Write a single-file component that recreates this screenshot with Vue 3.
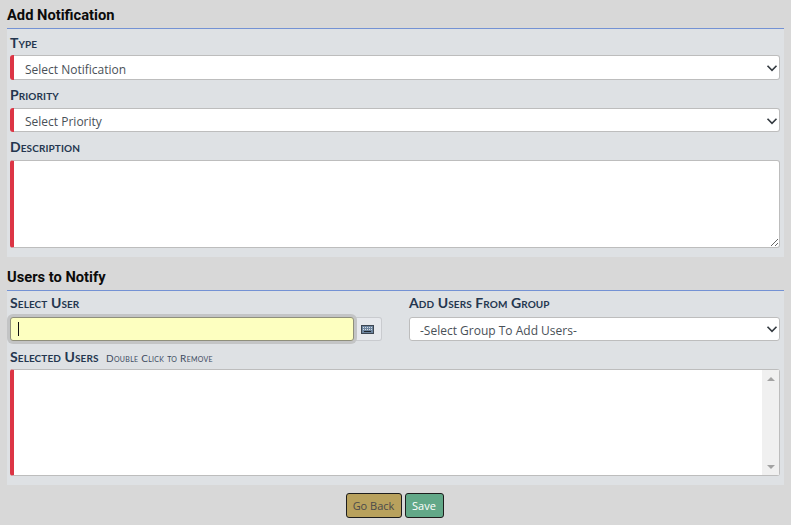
<script setup>
const chevron = "M2 5l6 6 6-6";
</script>

<template>
  <main class="page">
    <section class="block">
      <h2 class="heading">Add Notification</h2>
      <div class="panel">
        <label class="label">Type</label>
        <div class="select-wrap required">
          <select class="control"><option>Select Notification</option></select>
          <svg class="chevron" viewBox="0 0 16 16"><path :d="chevron" /></svg>
        </div>
        <label class="label">Priority</label>
        <div class="select-wrap required">
          <select class="control"><option>Select Priority</option></select>
          <svg class="chevron" viewBox="0 0 16 16"><path :d="chevron" /></svg>
        </div>
        <label class="label">Description</label>
        <textarea class="area required"></textarea>
      </div>
    </section>

    <section class="block second">
      <h2 class="heading">Users to Notify</h2>
      <div class="panel panel-users">
        <div class="columns">
          <div>
            <label class="label">Select User</label>
            <div class="input-group">
              <div class="input-box">
                <input class="user-input" type="text" />
                <span class="caret"></span>
              </div>
              <span class="addon">
                <svg width="13" height="9" viewBox="0 0 13 9">
                  <rect x="0.5" y="0.5" width="12" height="8" fill="#6d85a0" stroke="#3d4652" />
                  <path d="M2 2.5h9M2 4.5h9" stroke="#d5dce3" stroke-dasharray="1 1" />
                  <path d="M3 6.5h7" stroke="#20262e" stroke-width="1" />
                </svg>
              </span>
            </div>
          </div>
          <div>
            <label class="label">Add Users From Group</label>
            <div class="select-wrap group-wrap">
              <select class="control group"><option>-Select Group To Add Users-</option></select>
              <svg class="chevron" viewBox="0 0 16 16"><path :d="chevron" /></svg>
            </div>
          </div>
        </div>
        <div class="label selected-label">Selected Users <small>Double Click to Remove</small></div>
        <div class="listbox required">
          <div class="list"></div>
          <div class="scrollbar">
            <span class="arrow up"></span>
            <span class="arrow down"></span>
          </div>
        </div>
      </div>
    </section>

    <div class="actions">
      <button class="btn back" type="button">Go Back</button>
      <button class="btn save" type="button">Save</button>
    </div>
  </main>
</template>

<style>
html, body { margin: 0; background: #d8d8d8; }
</style>

<style scoped>
.page {
  box-sizing: border-box;
  width: 791px;
  height: 525px;
  overflow: hidden;
  padding: 0 7px;
  background: #d8d8d8;
  font-family: "Open Sans", sans-serif;
  color: #495057;
}
.heading {
  margin: 0;
  height: 29px;
  box-sizing: border-box;
  border-bottom: 1px solid #7492d4;
  padding: 6px 0 0;
  font-family: Roboto, sans-serif;
  font-size: 14.7px;
  line-height: 19px;
  font-weight: 700;
  color: #0b0b0b;
}
.second { margin-top: 6px; }
.second .heading { height: 28px; padding-top: 5px; }
.panel {
  display: flex;
  flex-direction: column;
  background: #dee1e4;
  padding: 2px 4px 9px 3px;
  height: 228px;
  box-sizing: border-box;
}
.panel-users { height: 194px; padding-top: 0; }
.label {
  display: block;
  height: 24.5px;
  font-family: Lato, sans-serif;
  font-size: 14px;
  line-height: 23px;
  font-weight: 700;
  font-variant: small-caps;
  letter-spacing: 0.1px;
  color: #24364f;
}
.panel-users .label { line-height: 24px; }
.select-wrap {
  position: relative;
  height: 25px;
  margin-bottom: 3px;
}
.select-wrap + .label + .select-wrap { margin-top: 0.5px; height: 24.5px; }
.group-wrap { height: 24px; margin: 1.5px 0 0; }
.required { border-left: 4px solid #dc3545; border-radius: 3px; }
.control {
  display: block;
  width: 100%;
  height: 100%;
  box-sizing: border-box;
  appearance: none;
  background: #fff;
  border: 1px solid #bdbdbd;
  border-radius: 3px;
  padding: 3px 11px 0;
  font-family: "Open Sans", sans-serif;
  font-size: 12px;
  color: #495057;
}
.required .control { border-left: 0; border-radius: 0 3px 3px 0; }
.group { padding-left: 10px; padding-top: 2px; }
.chevron {
  position: absolute;
  right: 2px;
  top: 7px;
  width: 12px;
  height: 12px;
  fill: none;
  stroke: #343a40;
  stroke-width: 2.2;
}
.group-wrap .chevron { top: 6px; }
.area {
  display: block;
  box-sizing: border-box;
  width: 100%;
  height: 89px;
  background: #fff;
  border: 1px solid #bdbdbd;
  border-left: 4px solid #dc3545;
  border-radius: 3px;
  margin: 0;
  outline: none;
}
.columns {
  display: grid;
  grid-template-columns: 372px 371px;
  column-gap: 27px;
}
.input-group { display: flex; height: 24px; margin-top: 1.5px; }
.input-box { position: relative; z-index: 1; flex: 0 0 344px; }
.user-input {
  display: block;
  width: 100%;
  height: 100%;
  box-sizing: border-box;
  background: #fdffc0;
  border: 1px solid #8f8f7c;
  border-radius: 3px;
  box-shadow: 0 0 0 3px #c3c4c5;
  outline: none;
  padding: 0 7px;
}
.caret {
  position: absolute;
  left: 8px;
  top: 5px;
  width: 1px;
  height: 14px;
  background: #111;
}
.addon {
  flex: 1;
  display: flex;
  align-items: center;
  justify-content: center;
  background: #e7e9ed;
  border: 1px solid #c9cbcf;
  border-left: 0;
  border-radius: 0 3px 3px 0;
  padding-right: 1px;
}
.selected-label { height: 24px; margin-top: 4px; line-height: 23px !important; }
.selected-label small {
  margin-left: 4px;
  font-size: 10px;
  font-weight: 400;
  letter-spacing: 0.3px;
  color: #3c4a5e;
}
.listbox {
  display: flex;
  height: 107px;
  box-sizing: border-box;
  background: #fff;
  border-top: 1px solid #bdbdbd;
  border-right: 1px solid #bdbdbd;
  border-bottom: 1px solid #bdbdbd;
}
.list { flex: 1; }
.scrollbar {
  width: 17px;
  background: #f0f0f0;
  display: flex;
  flex-direction: column;
  justify-content: space-between;
  align-items: center;
  padding: 7px 0 6px;
}
.arrow { width: 0; height: 0; border-left: 4px solid transparent; border-right: 4px solid transparent; }
.up { border-bottom: 4px solid #a3a3a3; }
.down { border-top: 4px solid #a3a3a3; }
.actions {
  display: flex;
  justify-content: center;
  gap: 3px;
  margin-top: 8px;
  padding-right: 2px;
}
.btn {
  height: 25px;
  box-sizing: border-box;
  border: 1px solid #1d1d1d;
  border-radius: 3px;
  padding: 0;
  font-family: "Open Sans", sans-serif;
  font-size: 11px;
}
.back { width: 56px; background: #b8a15d; color: #4a4a4a; }
.save { width: 39px; background: #62a888; color: #fff; }
</style>
